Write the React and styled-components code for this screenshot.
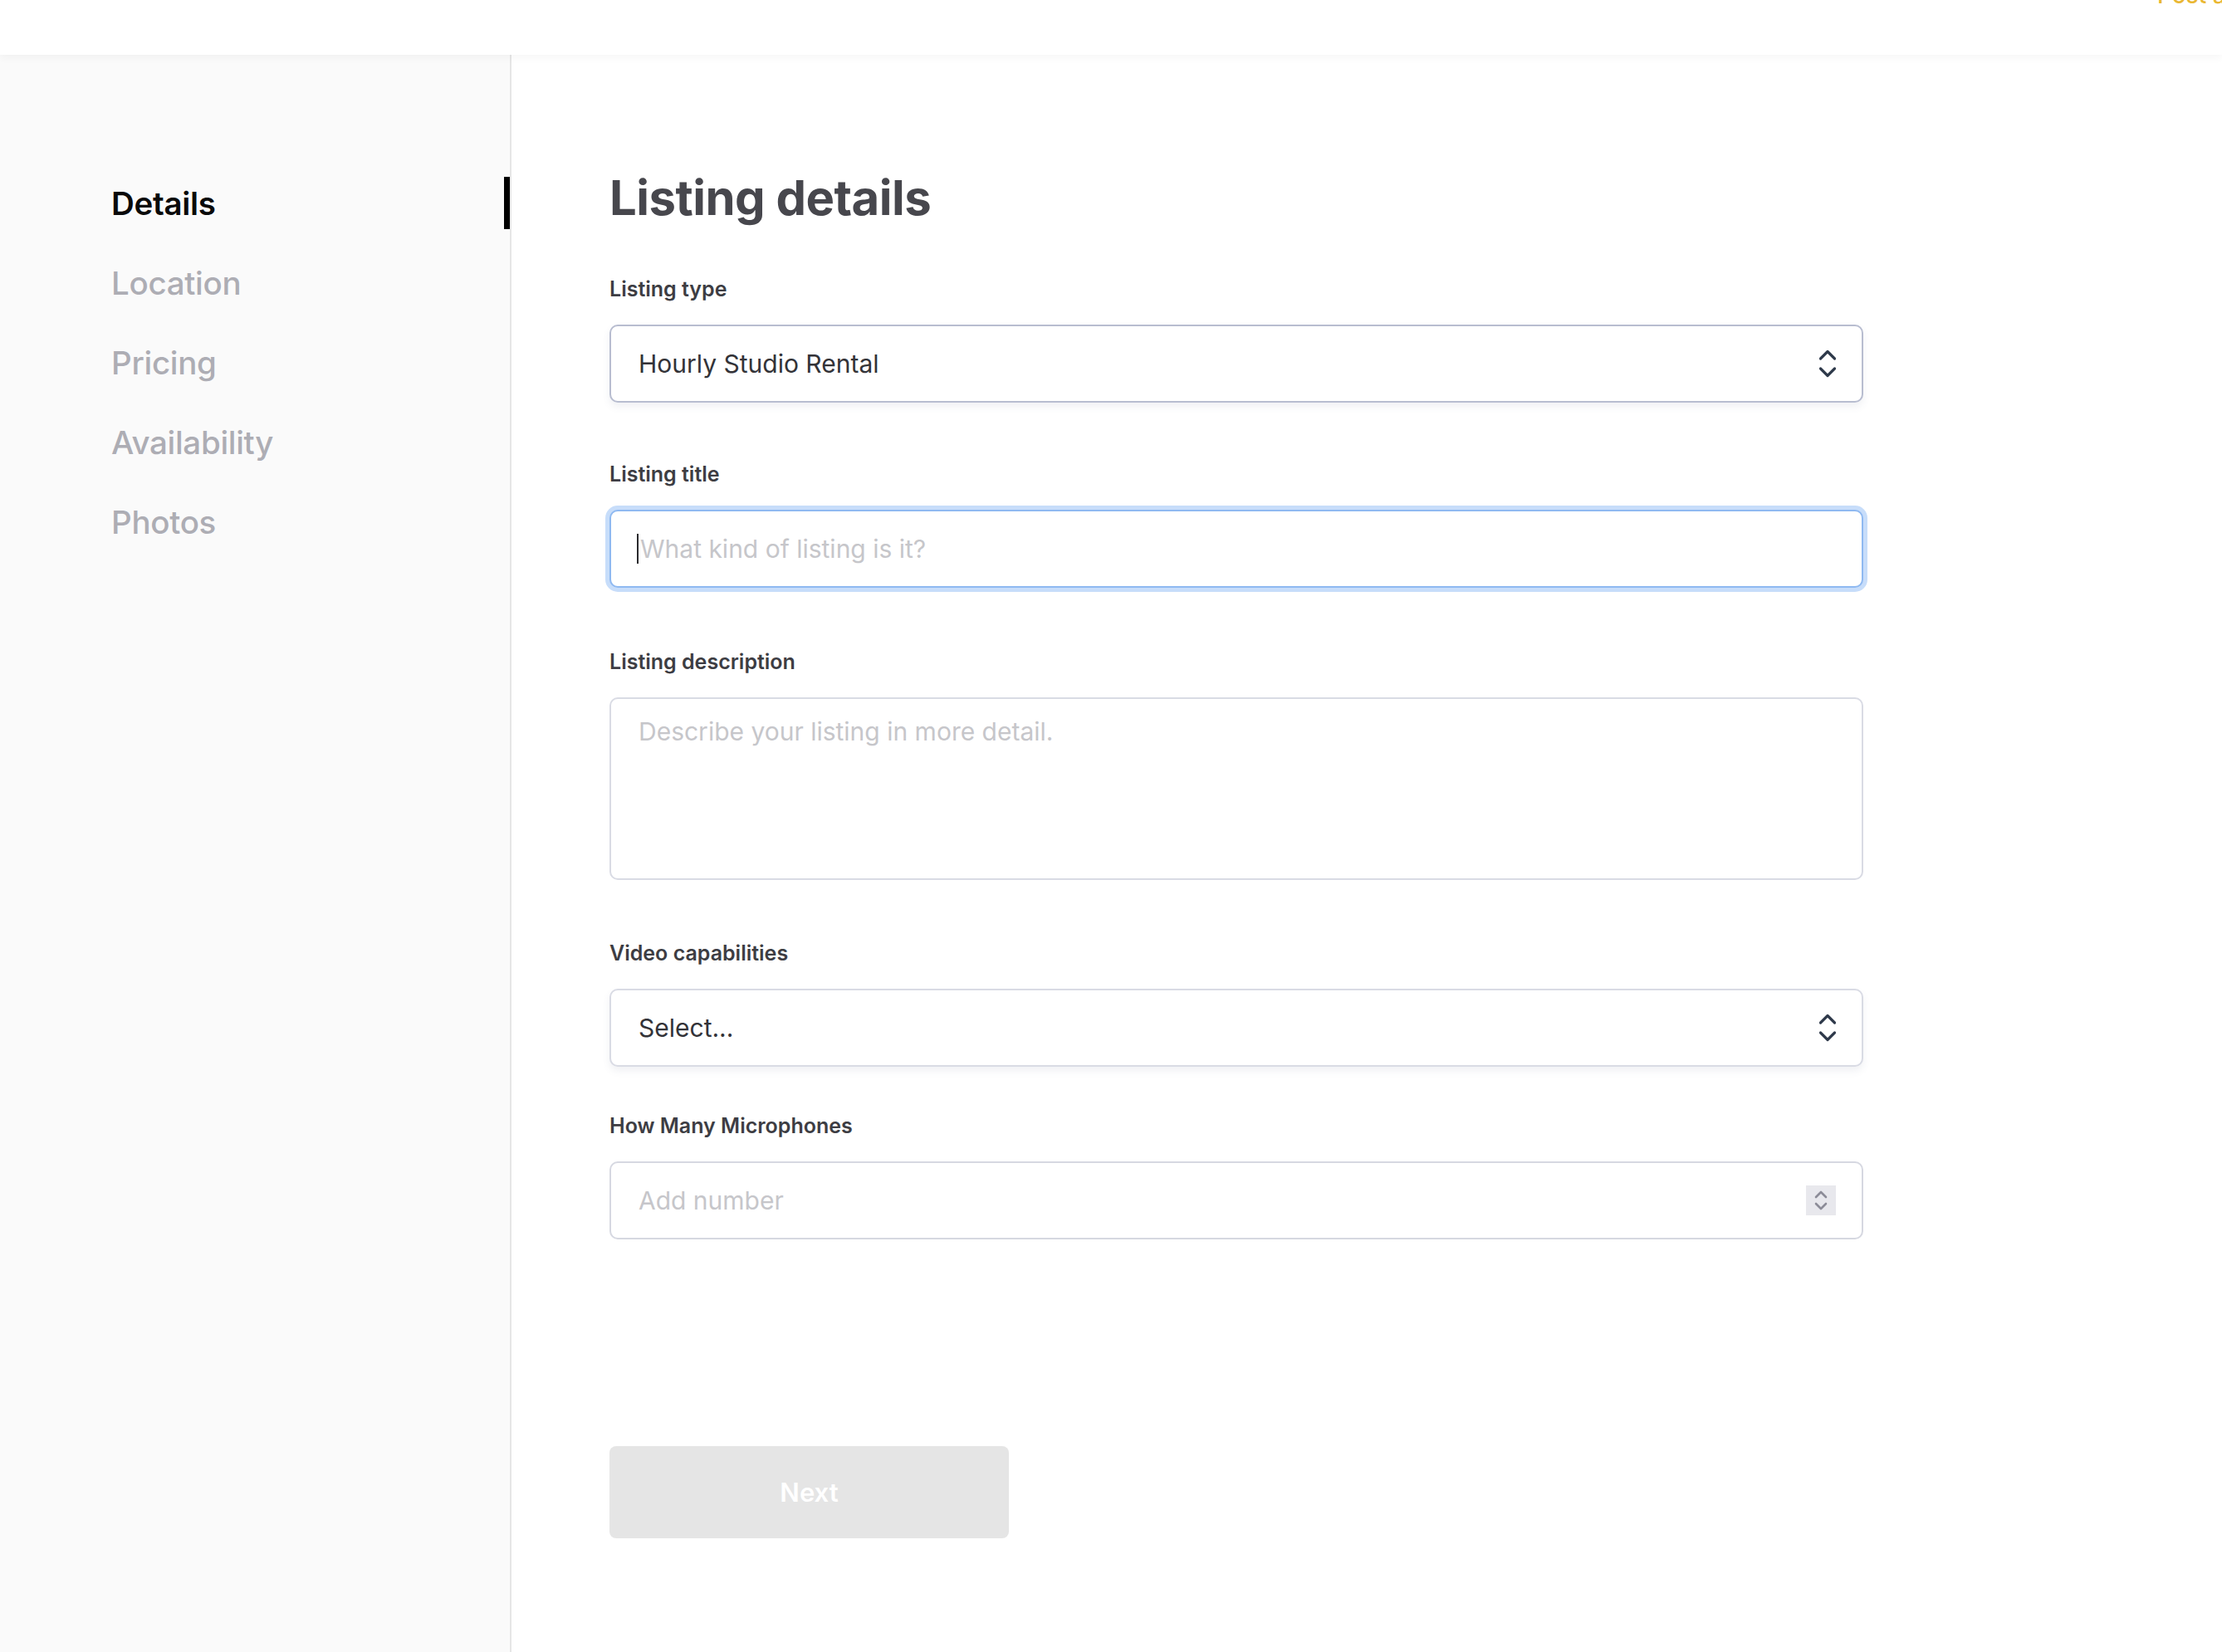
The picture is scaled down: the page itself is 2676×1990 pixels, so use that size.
import React from 'react';
import styled, { createGlobalStyle } from 'styled-components';

const GlobalStyle = createGlobalStyle`
  html, body {
    margin: 0;
    padding: 0;
    background: #ffffff;
    overflow-x: hidden;
  }
  body {
    font-family: 'Inter', 'Noto Sans', sans-serif;
    -webkit-font-smoothing: antialiased;
  }
  * {
    box-sizing: border-box;
  }
`;

const Page = styled.div`
  display: flex;
  flex-direction: column;
  min-height: 100vh;
`;

const Header = styled.header`
  position: relative;
  z-index: 1;
  height: 66px;
  display: flex;
  justify-content: flex-end;
  align-items: flex-start;
  overflow: hidden;
  background: #ffffff;
  box-shadow: 0 3px 10px rgba(0, 0, 0, 0.045);
`;

const PostLink = styled.a`
  margin-top: -20px;
  margin-right: -92px;
  font-size: 28px;
  line-height: 28px;
  font-weight: 500;
  color: #eab733;
  white-space: nowrap;
  text-decoration: none;
`;

const Body = styled.div`
  flex: 1;
  display: flex;
`;

const Sidebar = styled.nav`
  flex-shrink: 0;
  width: 616px;
  padding-top: 147px;
  background: #fafafa;
  border-right: 2px solid #e6e6e6;
  display: flex;
  flex-direction: column;
  gap: 33px;
`;

const NavItem = styled.a`
  height: 63px;
  display: flex;
  align-items: center;
  padding-left: 134px;
  font-size: 38.5px;
  letter-spacing: -0.3px;
  font-weight: ${(p) => (p.$active ? 600 : 500)};
  color: ${(p) => (p.$active ? '#0a0a0a' : '#adadb4')};
  border-right: 7px solid ${(p) => (p.$active ? '#000000' : 'transparent')};
  text-decoration: none;
`;

const Main = styled.main`
  flex: 1;
  padding: 136px 0 0 118px;
`;

const Form = styled.form`
  width: 1510px;
  display: flex;
  flex-direction: column;
`;

const Title = styled.h1`
  margin: 0;
  font-size: 58px;
  line-height: 72px;
  font-weight: 700;
  letter-spacing: -0.5px;
  color: #47474d;
`;

const Field = styled.div`
  margin-top: ${(p) => p.$mt}px;
  display: flex;
  flex-direction: column;
`;

const Label = styled.label`
  display: block;
  margin-bottom: 28px;
  font-size: 25px;
  line-height: 29px;
  font-weight: 600;
  color: #3d3d43;
`;

const SelectBox = styled.div`
  height: 94px;
  padding: 0 30px 0 33px;
  display: flex;
  align-items: center;
  justify-content: space-between;
  background: #ffffff;
  border: 2px solid ${(p) => (p.$strong ? '#b8bdd0' : '#d9dbe4')};
  border-radius: 10px;
  box-shadow: 0 5px 10px rgba(90, 100, 130, 0.09);
`;

const SelectValue = styled.span`
  font-size: 30px;
  color: #333338;
`;

const FocusBox = styled.div`
  height: 94px;
  padding: 0 33px 0 31px;
  display: flex;
  align-items: center;
  background: #ffffff;
  border: 2px solid #8fb9f1;
  border-radius: 10px;
  box-shadow: 0 0 0 5px #c7ddfa;
`;

const Caret = styled.span`
  flex-shrink: 0;
  width: 2px;
  height: 36px;
  margin-right: 2px;
  background: #2a2a2e;
`;

const PlainInput = styled.input`
  flex: 1;
  min-width: 0;
  padding: 0;
  border: none;
  outline: none;
  background: transparent;
  font-family: inherit;
  font-size: 30px;
  color: #333338;
  caret-color: transparent;

  &::placeholder {
    color: #c6c6ca;
  }
`;

const TextArea = styled.textarea`
  height: 220px;
  padding: 21px 33px;
  resize: none;
  font-family: inherit;
  font-size: 30px;
  line-height: 36px;
  color: #333338;
  background: #ffffff;
  border: 2px solid #d9dbe4;
  border-radius: 10px;
  outline: none;

  &::placeholder {
    color: #c6c6ca;
  }
`;

const NumberBox = styled.div`
  height: 94px;
  padding: 0 31px 0 33px;
  display: flex;
  align-items: center;
  background: #ffffff;
  border: 2px solid #d6d8e1;
  border-radius: 10px;
`;

const Spinner = styled.div`
  width: 36px;
  height: 36px;
  display: flex;
  align-items: center;
  justify-content: center;
  background: #e8e8ed;
`;

const NextButton = styled.button`
  margin-top: 249px;
  width: 481px;
  height: 111px;
  border: none;
  border-radius: 8px;
  background: #e5e5e5;
  color: #ffffff;
  font-family: inherit;
  font-size: 31px;
  font-weight: 600;
`;

const Chevrons = () => (
  <svg width="22" height="34" viewBox="0 0 22 34" fill="none">
    <polyline points="2.5,11 11,2.5 19.5,11" stroke="#2f3a4b" strokeWidth="3.2" strokeLinecap="round" strokeLinejoin="round" />
    <polyline points="2.5,23 11,31.5 19.5,23" stroke="#2f3a4b" strokeWidth="3.2" strokeLinecap="round" strokeLinejoin="round" />
  </svg>
);

const SmallChevrons = () => (
  <svg width="18" height="26" viewBox="0 0 18 26" fill="none">
    <polyline points="3,9 9,3 15,9" stroke="#8c8c98" strokeWidth="2.6" strokeLinecap="round" strokeLinejoin="round" />
    <polyline points="3,17 9,23 15,17" stroke="#8c8c98" strokeWidth="2.6" strokeLinecap="round" strokeLinejoin="round" />
  </svg>
);

const navItems = ['Details', 'Location', 'Pricing', 'Availability', 'Photos'];

export default function App() {
  return (
    <>
      <GlobalStyle />
      <Page>
        <Header>
          <PostLink href="#">Post a listing</PostLink>
        </Header>
        <Body>
          <Sidebar>
            {navItems.map((item, i) => (
              <NavItem key={item} href="#" $active={i === 0}>
                {item}
              </NavItem>
            ))}
          </Sidebar>
          <Main>
            <Form onSubmit={(e) => e.preventDefault()}>
              <Title>Listing details</Title>

              <Field $mt={60}>
                <Label>Listing type</Label>
                <SelectBox $strong>
                  <SelectValue>Hourly Studio Rental</SelectValue>
                  <Chevrons />
                </SelectBox>
              </Field>

              <Field $mt={72}>
                <Label>Listing title</Label>
                <FocusBox>
                  <Caret />
                  <PlainInput placeholder="What kind of listing is it?" />
                </FocusBox>
              </Field>

              <Field $mt={75}>
                <Label>Listing description</Label>
                <TextArea placeholder="Describe your listing in more detail." />
              </Field>

              <Field $mt={74}>
                <Label>Video capabilities</Label>
                <SelectBox>
                  <SelectValue>Select...</SelectValue>
                  <Chevrons />
                </SelectBox>
              </Field>

              <Field $mt={57}>
                <Label>How Many Microphones</Label>
                <NumberBox>
                  <PlainInput placeholder="Add number" />
                  <Spinner>
                    <SmallChevrons />
                  </Spinner>
                </NumberBox>
              </Field>

              <NextButton type="submit" disabled>Next</NextButton>
            </Form>
          </Main>
        </Body>
      </Page>
    </>
  );
}
